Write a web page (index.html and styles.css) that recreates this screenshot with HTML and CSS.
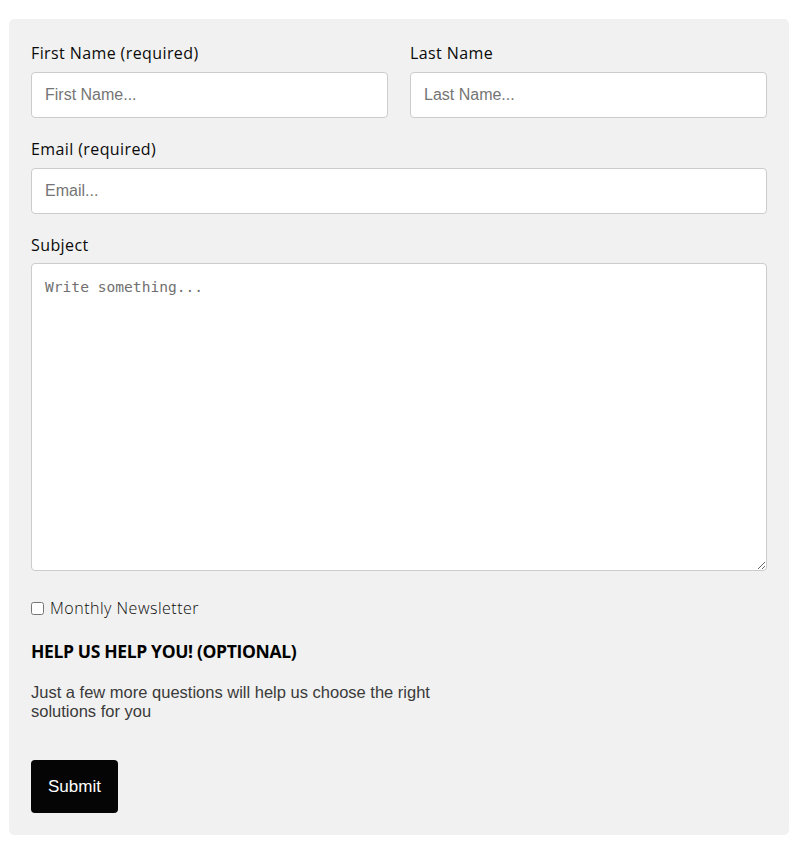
FILE: index.html
```html
<!DOCTYPE html>
<html lang="en">
<head>
<meta charset="utf-8">
<title>Contact form</title>
<link rel="stylesheet" href="styles.css">
</head>
<body>
<div class="page">
  <form class="card">
    <div class="row">
      <div class="field">
        <label class="label" for="fname">First Name (required)</label>
        <input class="input" id="fname" type="text" placeholder="First Name...">
      </div>
      <div class="field">
        <label class="label" for="lname">Last Name</label>
        <input class="input" id="lname" type="text" placeholder="Last Name...">
      </div>
    </div>
    <div class="field">
      <label class="label" for="email">Email (required)</label>
      <input class="input" id="email" type="email" placeholder="Email...">
    </div>
    <div class="field">
      <label class="label" for="subject">Subject</label>
      <textarea class="textarea" id="subject" placeholder="Write something..."></textarea>
    </div>
    <label class="check">
      <input class="checkbox" type="checkbox">
      <span>Monthly Newsletter</span>
    </label>
    <h3 class="heading">HELP US HELP YOU! (OPTIONAL)</h3>
    <p class="note">Just a few more questions will help us choose the right solutions for you</p>
    <div class="actions">
      <button class="submit" type="button">Submit</button>
    </div>
  </form>
</div>
</body>
</html>
```
FILE: styles.css
```css
* {
  box-sizing: border-box;
}

html, body {
  margin: 0;
  padding: 0;
  background: #ffffff;
}

.page {
  padding: 19px 10px 21px 9px;
}

.card {
  background: #f1f1f1;
  border-radius: 5px;
  padding: 22px 22px 22px 22px;
  display: flex;
  flex-direction: column;
  font-family: "Open Sans", "Liberation Sans", sans-serif;
  color: #000;
}

.row {
  display: grid;
  grid-template-columns: 1fr 1fr;
  column-gap: 22px;
}

.field {
  display: flex;
  flex-direction: column;
  margin-bottom: 19px;
}

.label {
  font-size: 16px;
  line-height: 24px;
  letter-spacing: 0.4px;
  margin-bottom: 7px;
  color: #0a0a0a;
}

.input {
  height: 46px;
  border: 1px solid #cccccc;
  border-radius: 4px;
  background: #fff;
  padding: 0 13px;
  font-family: "Liberation Sans", Arial, sans-serif;
  font-size: 16px;
  color: #000;
  outline: none;
}

.input::placeholder {
  color: #757575;
}

.textarea {
  display: block;
  height: 308px;
  margin-top: -1px;
  border: 1px solid #cccccc;
  border-radius: 4px;
  background: #fff;
  padding: 13px 13px;
  font-family: "DejaVu Sans Mono", "Liberation Mono", monospace;
  font-size: 14.6px;
  line-height: 20px;
  resize: vertical;
  outline: none;
}

.textarea::placeholder {
  color: #707070;
}

.check {
  display: flex;
  align-items: center;
  margin-top: 6px;
  font-size: 16px;
  line-height: 24px;
  font-weight: 300;
  letter-spacing: 0.5px;
  color: #0a0a0a;
}

.checkbox {
  width: 13px;
  height: 13px;
  margin: 0 6px 0 0;
}

.heading {
  margin: 18px 0 0 0;
  font-size: 17.5px;
  line-height: 26px;
  letter-spacing: -0.35px;
  font-weight: 700;
  color: #000;
}

.note {
  margin: 19px 0 0 0;
  max-width: 450px;
  font-family: "Liberation Sans", Arial, sans-serif;
  font-size: 16.5px;
  line-height: 19px;
  color: #3a3a3a;
}

.actions {
  margin-top: 39px;
}

.submit {
  background: #050505;
  color: #fff;
  border: none;
  border-radius: 4px;
  padding: 17px 17px;
  font-family: "Liberation Sans", Arial, sans-serif;
  font-size: 17px;
  line-height: 19px;
  cursor: pointer;
}
```
